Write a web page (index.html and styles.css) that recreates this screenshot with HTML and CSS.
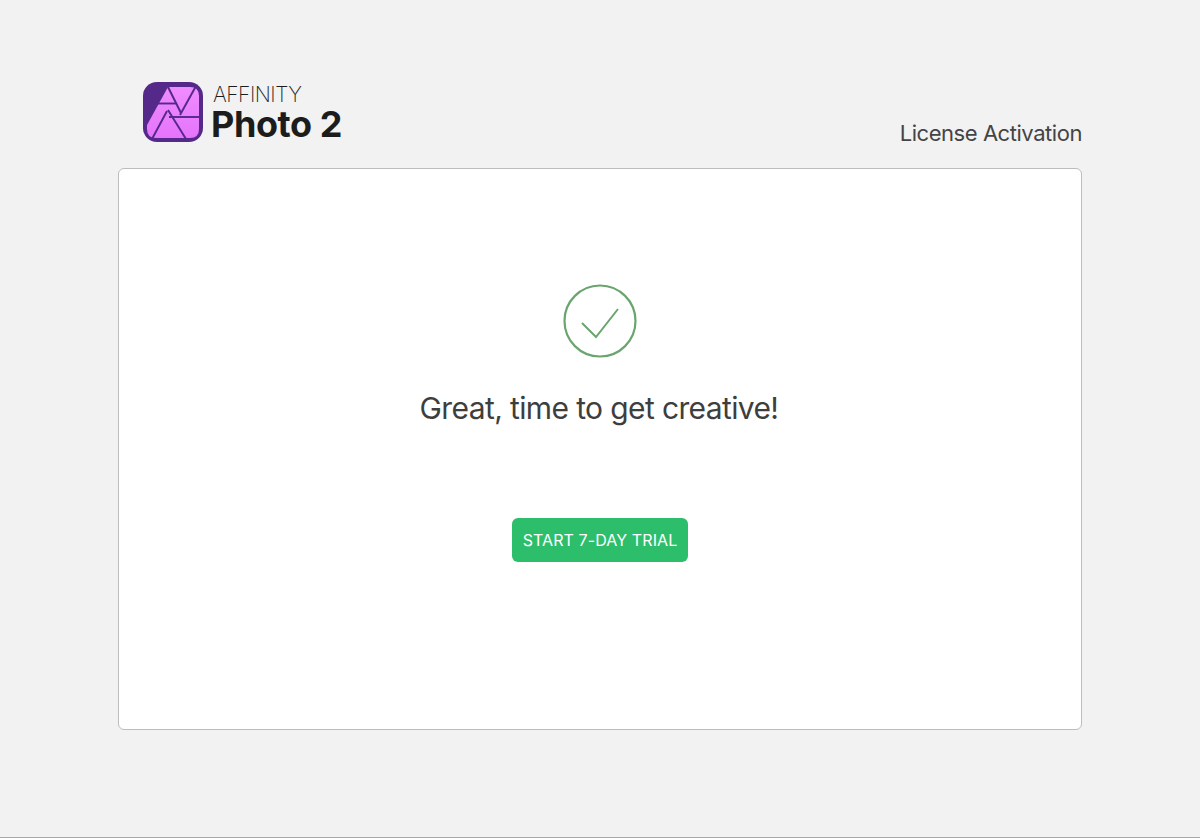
FILE: index.html
```html
<!DOCTYPE html>
<html>
<head>
    <title>License Activation</title>
    <link rel="stylesheet" href="styles.css">
</head>
<body>
    <div class="page">
        <header class="top-bar">
            <div class="logo">
                <svg class="logo-icon" width="60" height="60" viewBox="0 0 60 60">
                    <defs>
                        <linearGradient id="blade" x1="0" y1="0" x2="0" y2="1">
                            <stop offset="0" stop-color="#f08cff"/>
                            <stop offset="1" stop-color="#e574fb"/>
                        </linearGradient>
                    </defs>
                    <rect width="60" height="60" rx="14" fill="#54298a"/>
                    <path d="M25 5 H47 Q56 5 56 14 V47 Q56 56 47 56 H13 Q4 56 4 47 V43 Z" fill="url(#blade)"/>
                    <g stroke="#54298a" stroke-width="1.9" fill="none">
                        <path d="M15 21.5 H33"/>
                        <path d="M25 5 L38 31"/>
                        <path d="M53 4 L37 33"/>
                        <path d="M57 35 H26"/>
                        <path d="M43 57 L25 28"/>
                        <path d="M9 57 L24 29"/>
                    </g>
                </svg>
                <div class="logo-text">
                    <div class="logo-brand">AFFINITY</div>
                    <div class="logo-product">Photo 2</div>
                </div>
            </div>
            <div class="page-title">License Activation</div>
        </header>

        <main class="card">
            <svg class="check-icon" width="74" height="74" viewBox="0 0 74 74">
                <circle cx="37" cy="37" r="35.5" fill="none" stroke="#6ba56e" stroke-width="2.2"/>
                <path d="M19 39 L33 53 L55 25" fill="none" stroke="#6ba56e" stroke-width="2"/>
            </svg>
            <h1 class="message">Great, time to get creative!</h1>
            <button class="button">START 7-DAY TRIAL</button>
        </main>
    </div>
</body>
</html>
```

FILE: styles.css
```css
* {
    box-sizing: border-box;
}
body {
    margin: 0;
    height: 838px;
    overflow: hidden;
    background-color: #f2f2f2;
    border-bottom: 1px solid #a8a8a8;
    font-family: Inter, "Liberation Sans", sans-serif;
}
.page {
    width: 964px;
    margin: 0 auto;
    padding-top: 82px;
}
.top-bar {
    display: flex;
    justify-content: space-between;
    align-items: flex-start;
    height: 86px;
    padding-left: 25px;
}
.logo {
    display: flex;
    gap: 8px;
}
.logo-icon {
    display: block;
}
.logo-brand {
    padding: 1px 0 0 2px;
    font-size: 21px;
    font-weight: 200;
    line-height: 24px;
    letter-spacing: -0.5px;
    color: #1c1c1c;
}
.logo-product {
    font-size: 36px;
    font-weight: 700;
    line-height: 34px;
    letter-spacing: -0.4px;
    color: #1c1c1c;
}
.page-title {
    margin-top: 38px;
    font-size: 22px;
    line-height: 26px;
    letter-spacing: -0.45px;
    color: #444444;
}
.card {
    display: flex;
    flex-direction: column;
    align-items: center;
    height: 562px;
    padding-top: 115px;
    background-color: #ffffff;
    border: 1px solid #bdbdbd;
    border-radius: 6px;
}
.message {
    margin: 30px 2px 0 0;
    font-size: 30px;
    font-weight: 400;
    line-height: 40px;
    letter-spacing: -0.62px;
    color: #3e3e3e;
}
/* Green trial button */
.button {
    width: 176px;
    height: 44px;
    margin-top: 90px;
    padding: 0;
    border: none;
    border-radius: 6px;
    background-color: #2dbe6c;
    color: white;
    cursor: pointer;
    font-family: inherit;
    font-size: 16px;
    letter-spacing: 0.1px;
}
```
